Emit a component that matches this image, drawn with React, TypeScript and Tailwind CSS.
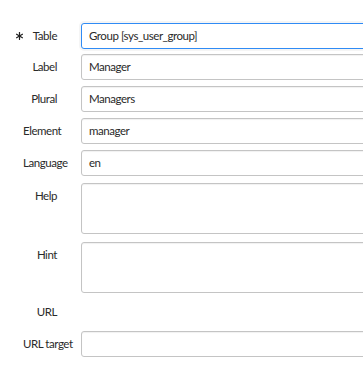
import React from "react";

const font = { fontFamily: "Lato, 'Open Sans', Arial, sans-serif" };

function Label({ text, req }: { text: string; req?: boolean }) {
  return (
    <div className="w-[57px] shrink-0 flex h-[26px] items-center">
      <span className="w-[16px] shrink-0" />
      <span className="w-[7px] shrink-0 flex items-center">
        {req && (
          <svg width="7" height="8" viewBox="0 0 7 8" className="block">
            <g stroke="#222" strokeWidth="1.2" strokeLinecap="round">
              <line x1="3.5" y1="0.5" x2="3.5" y2="7.5" />
              <line x1="0.6" y1="2.2" x2="6.4" y2="5.8" />
              <line x1="0.6" y1="5.8" x2="6.4" y2="2.2" />
            </g>
          </svg>
        )}
      </span>
      <span className="flex-1 text-right text-[11.5px] tracking-[-0.45px] text-[#2a2a2a] whitespace-nowrap">{text}</span>
    </div>
  );
}

function Row({
  label,
  value,
  req,
  focus,
  h = 26,
  mb = 6,
  noInput,
}: {
  label: string;
  value?: string;
  req?: boolean;
  focus?: boolean;
  h?: number;
  mb?: number;
  noInput?: boolean;
}) {
  return (
    <div className="flex items-start" style={{ marginBottom: mb }}>
      <Label text={label} req={req} />
      <div className="w-[24px] shrink-0" />
      {noInput ? (
        <div className="h-[26px]" />
      ) : (
        <div
          className={
            "w-[320px] shrink-0 rounded-[3px] border bg-white pl-[7px] flex items-start text-[11.5px] tracking-[-0.45px] text-[#2a2a2a] " +
            (focus
              ? "border-[#2f8bf5] shadow-[0_0_0_2px_rgba(0,0,0,0.04)]"
              : "border-[#c4c4c4] shadow-[inset_0_1px_1px_rgba(0,0,0,0.06)]")
          }
          style={{ height: h }}
        >
          <span className="leading-[24px] whitespace-nowrap">{value}</span>
        </div>
      )}
    </div>
  );
}

export default function App() {
  return (
    <div className="w-[363px] h-[389px] overflow-hidden bg-white pt-[23px]" style={font}>
      <Row label="Table" value="Group [sys_user_group]" req focus mb={5} />
      <Row label="Label" value="Manager" />
      <Row label="Plural" value="Managers" />
      <Row label="Element" value="manager" />
      <Row label="Language" value="en" mb={7} />
      <Row label="Help" value="" h={51} mb={8} />
      <Row label="Hint" value="" h={51} mb={6} />
      <Row label="URL" noInput />
      <Row label="URL target" value="" />
    </div>
  );
}
